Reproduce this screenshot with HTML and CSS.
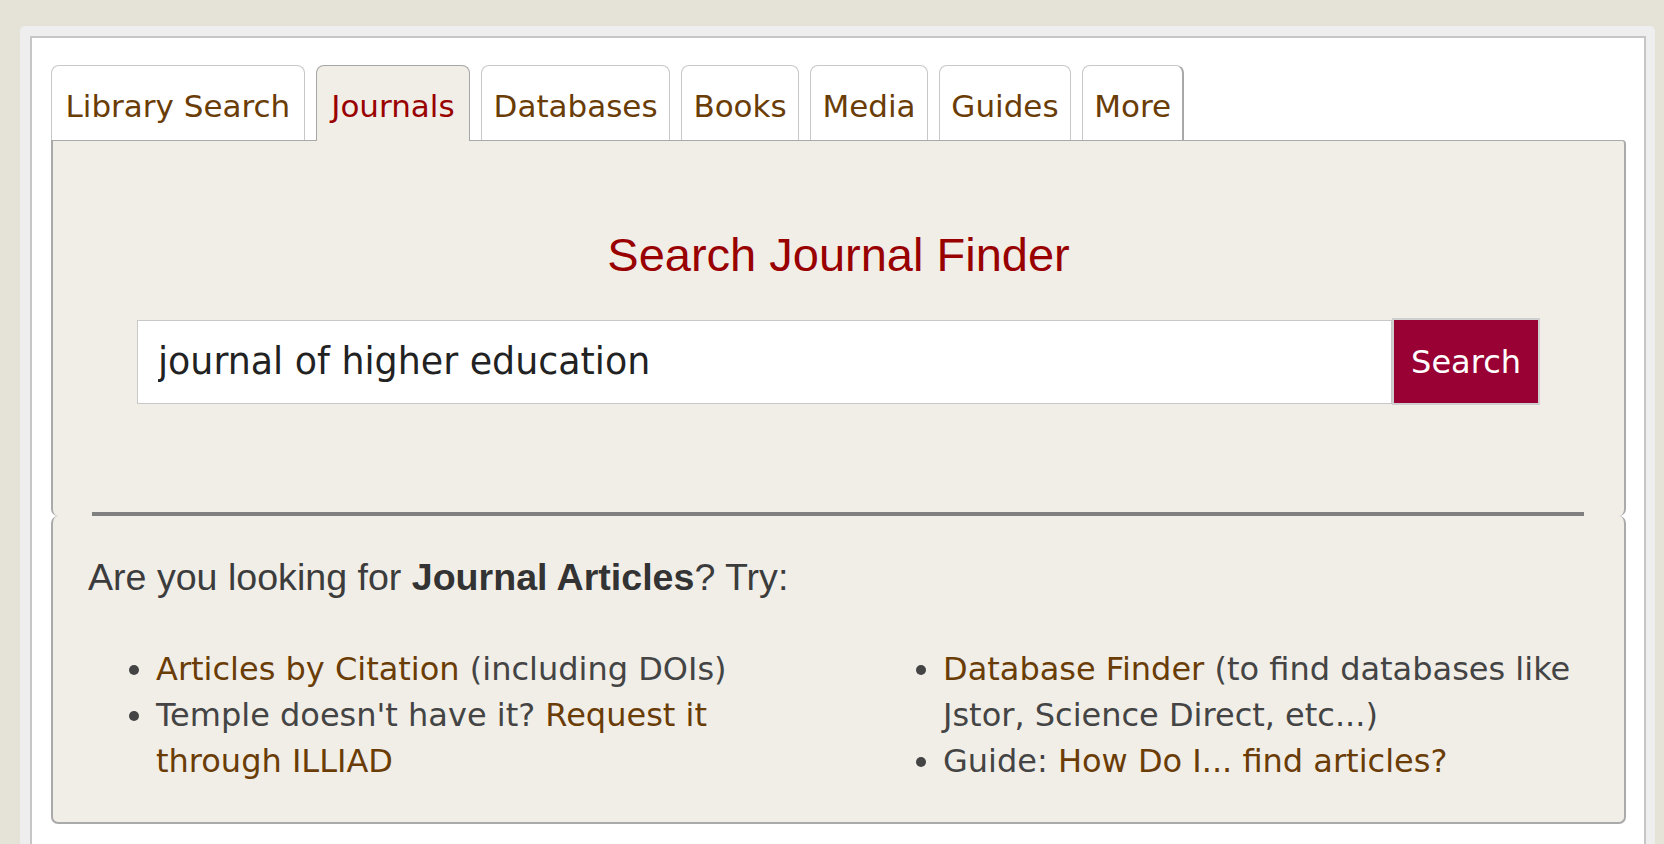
FILE: index.html
```html
<!DOCTYPE html>
<html lang="en">
<head>
<meta charset="utf-8">
<title>Search Journal Finder</title>
<link rel="stylesheet" href="styles.css">
</head>
<body>
<div class="frame">
  <div class="box">
    <ul class="tabs">
      <li class="tab tab-wide"><a href="#">Library Search</a></li>
      <li class="tab tab-wider active"><a href="#">Journals</a></li>
      <li class="tab"><a href="#">Databases</a></li>
      <li class="tab"><a href="#">Books</a></li>
      <li class="tab"><a href="#">Media</a></li>
      <li class="tab"><a href="#">Guides</a></li>
      <li class="tab tab-last"><a href="#">More</a></li>
    </ul>
    <div class="panel">
      <h2 class="title">Search Journal Finder</h2>
      <form class="search-row" onsubmit="return false;">
        <input class="search-input" type="text" value="journal of higher education">
        <button class="search-btn" type="submit">Search</button>
      </form>
      <hr class="divider">
    </div>
    <div class="more-panel">
      <p class="lead">Are you looking for <strong>Journal Articles</strong>? Try:</p>
      <div class="cols">
        <ul class="links">
          <li><a href="#">Articles by Citation</a> (including DOIs)</li>
          <li>Temple doesn't have it? <a href="#">Request it through ILLIAD</a></li>
        </ul>
        <ul class="links">
          <li><a href="#">Database Finder</a> (to find databases like Jstor, Science Direct, etc...)</li>
          <li>Guide: <a href="#">How Do I... find articles?</a></li>
        </ul>
      </div>
    </div>
  </div>
</div>
</body>
</html>
```

FILE: styles.css
```css
html, body {
  margin: 0;
  height: 100%;
}

body {
  box-sizing: border-box;
  background: #e5e3d8;
  padding: 26px 9px 0 20px;
  overflow: hidden;
}

.frame {
  box-sizing: border-box;
  background: #eeeeee;
  border-radius: 5px 5px 0 0;
  padding: 10px 9px 0 10px;
  min-height: 818px;
}

.box {
  box-sizing: border-box;
  background: #ffffff;
  border: 2px solid #c6c6c6;
  border-bottom: 0;
  padding: 27px 18px 16px 19px;
  min-height: 808px;
}

.tabs {
  list-style: none;
  margin: 0;
  padding: 0;
  display: flex;
  align-items: flex-end;
  gap: 11px;
}

.tab a {
  display: block;
  padding: 22px 11.4px 16px;
  font-family: "DejaVu Sans", Verdana, sans-serif;
  font-size: 31px;
  line-height: 36px;
  color: #6a3c06;
  text-decoration: none;
  background: #ffffff;
  border: 1px solid #c8c8c8;
  border-bottom: 0;
  border-radius: 8px 8px 0 0;
}

.tab-wide a {
  padding-left: 13.5px;
  padding-right: 13.5px;
}

.tab-wider a {
  padding-left: 14.5px;
  padding-right: 14.5px;
}

.tab.active a {
  position: relative;
  z-index: 1;
  margin-bottom: -1px;
  padding-bottom: 17px;
  color: #990000;
  background: #f1eee8;
  border-color: #a6a6a6;
}

.tab-last a {
  border-right: 2px solid #a8a8a8;
  padding-right: 10.5px;
}

.panel {
  background: #f1eee8;
  border: 2px solid #aaaaaa;
  border-top-width: 1px;
  border-bottom: 0;
  border-radius: 0 4px 7px 7px;
  padding-top: 86px;
}

.title {
  margin: 0;
  font-family: "Liberation Sans", Arial, Helvetica, sans-serif;
  font-weight: normal;
  font-size: 47px;
  line-height: 56px;
  text-align: center;
  color: #990000;
}

.search-row {
  display: flex;
  align-items: center;
  margin: 35px 84px 0;
}

.search-input {
  flex: 1;
  min-width: 0;
  height: 84px;
  box-sizing: border-box;
  margin: 0;
  padding: 0 20px;
  border: 1px solid #c8c8c8;
  background: #ffffff;
  font-family: "DejaVu Sans", Verdana, sans-serif;
  font-size: 36.4px;
  color: #222222;
  outline: none;
}

.search-btn {
  height: 87px;
  box-sizing: border-box;
  margin: 0;
  padding: 0 17px;
  border: 2px solid #cfcfcf;
  background: #990033;
  color: #ffffff;
  font-family: "DejaVu Sans", Verdana, sans-serif;
  font-size: 32px;
  cursor: pointer;
}

.divider {
  display: block;
  height: 4px;
  border: 0;
  background: #808080;
  margin: 107px 40px 0 39px;
}

.more-panel {
  background: #f1eee8;
  border: 2px solid #aaaaaa;
  border-top: 0;
  border-radius: 7px;
  padding: 39px 36px 38px 35px;
}

.lead {
  margin: 0;
  font-family: "Liberation Sans", Arial, Helvetica, sans-serif;
  font-size: 37.6px;
  line-height: 44px;
  color: #3c3c3c;
}

.lead strong {
  color: #333333;
}

.cols {
  display: grid;
  grid-template-columns: 712px 1fr;
  column-gap: 75px;
  margin-top: 47px;
}

.links {
  margin: 0;
  padding-left: 68px;
  font-family: "DejaVu Sans", Verdana, sans-serif;
  font-size: 32px;
  line-height: 46px;
  color: #444444;
}

.links a {
  color: #6a3c06;
  text-decoration: none;
}
```
